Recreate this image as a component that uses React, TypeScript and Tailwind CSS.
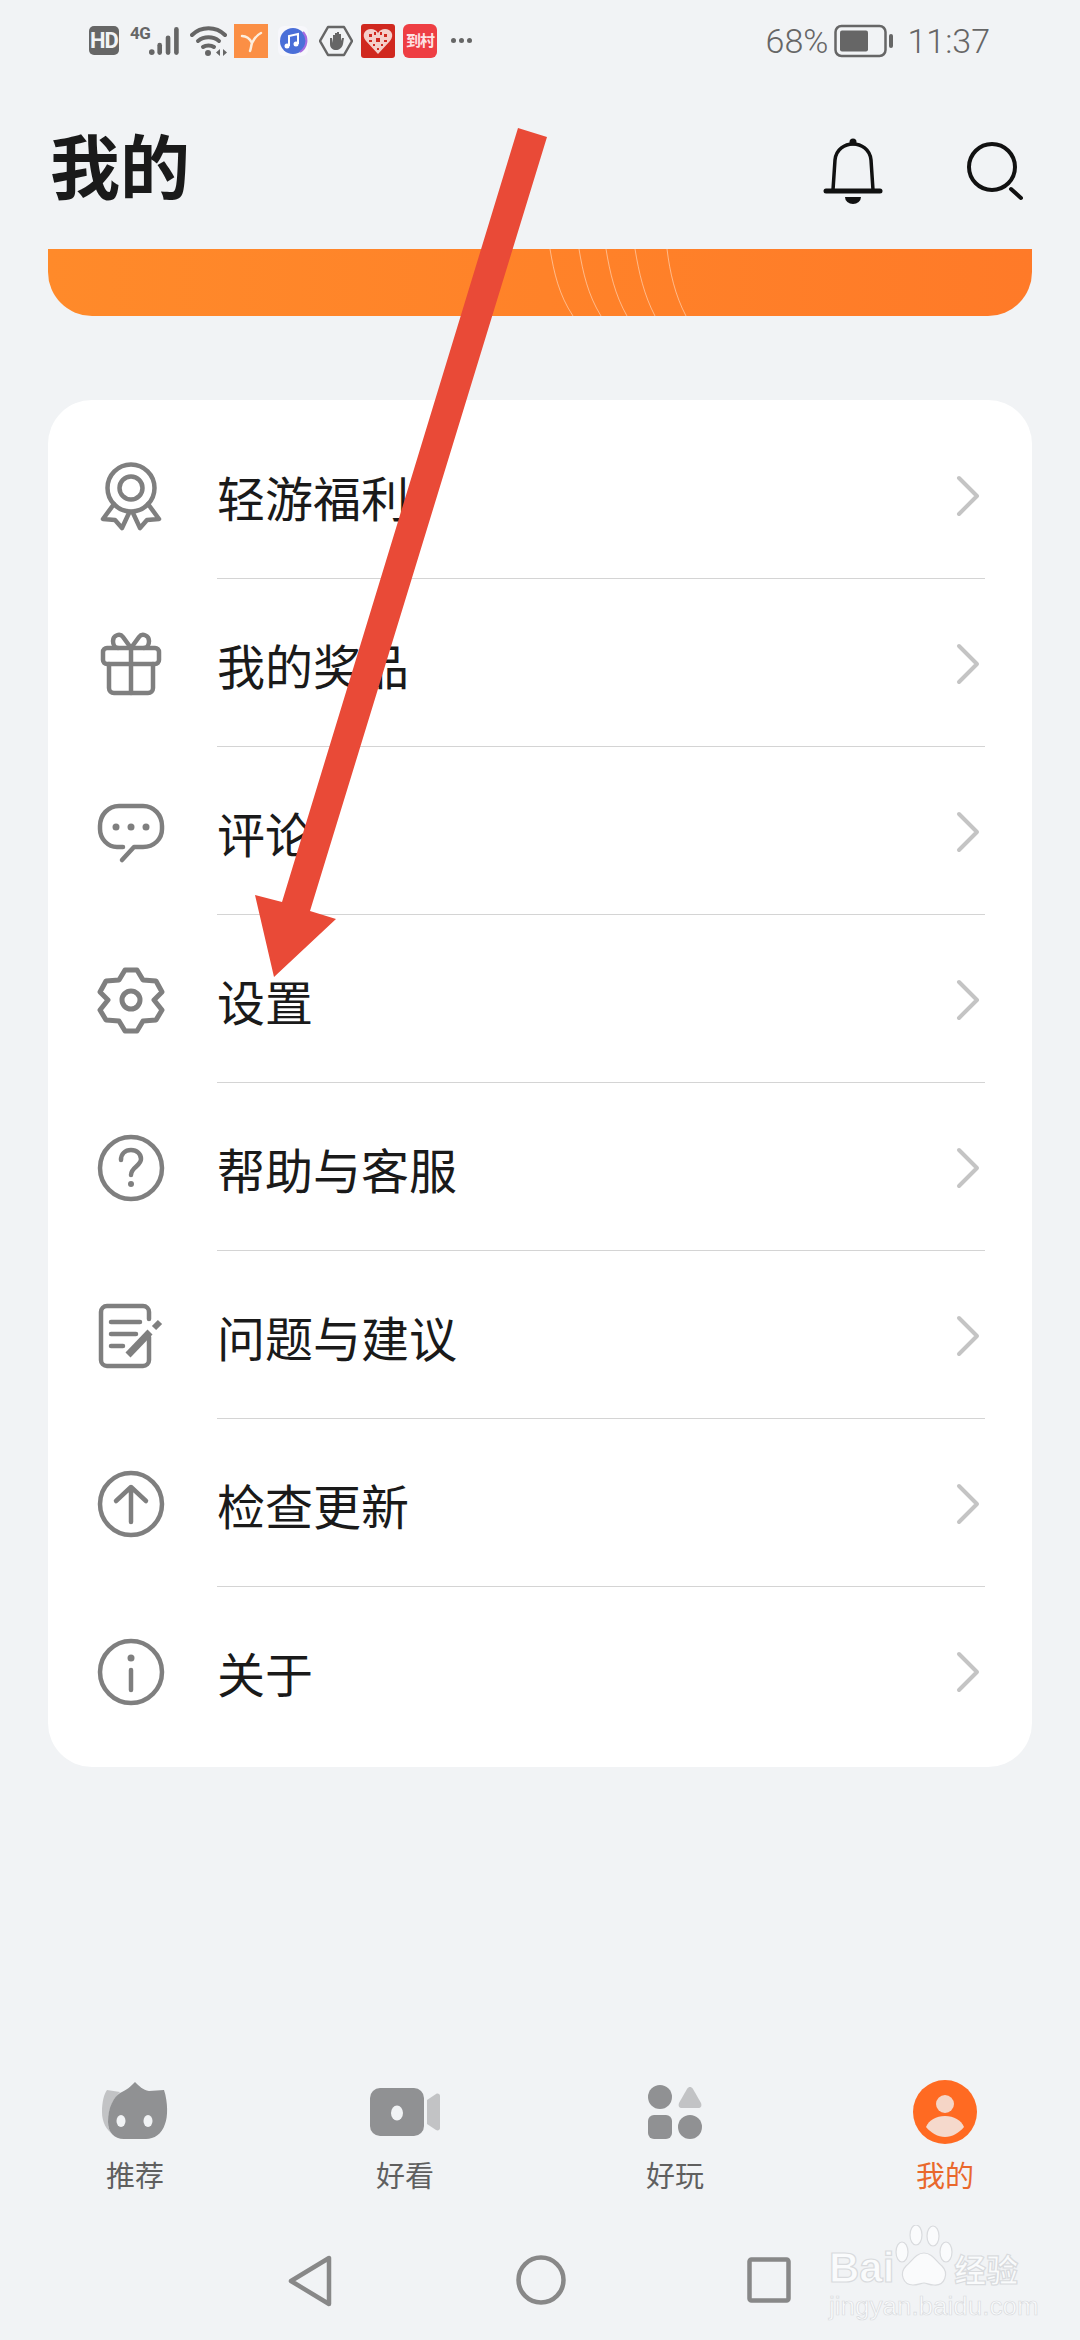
const rows = [
  { label: "轻游福利", icon: <AwardIcon /> },
  { label: "我的奖品", icon: <GiftIcon /> },
  { label: "评论", icon: <CommentIcon /> },
  { label: "设置", icon: <GearIcon /> },
  { label: "帮助与客服", icon: <HelpIcon /> },
  { label: "问题与建议", icon: <EditIcon /> },
  { label: "检查更新", icon: <UpdateIcon /> },
  { label: "关于", icon: <InfoIcon /> },
];

function IconBox({ children }: { children: React.ReactNode }) {
  return (
    <svg
      width="66"
      height="66"
      viewBox="0 0 66 66"
      fill="none"
      stroke="#7f7f7f"
      strokeWidth="4.500"
      strokeLinecap="round"
      strokeLinejoin="round"
      className="shrink-0 overflow-visible"
    >
      {children}
    </svg>
  );
}

function AwardIcon() {
  return (
    <IconBox>
      <circle cx="33" cy="25" r="23.500" />
      <circle cx="33" cy="25" r="11.500" />
      <path d="M16 41 5 56l12 1 7 8 7-15" />
      <path d="M50 41l11 15-12 1-7 8-7-15" />
    </IconBox>
  );
}

function GiftIcon() {
  return (
    <IconBox>
      <rect x="5" y="17" width="56" height="16" rx="4" />
      <path d="M11 33v24a5 5 0 0 0 5 5h34a5 5 0 0 0 5-5V33" />
      <path d="M33 17v45" />
      <path d="M33 17 25 6c-3-4-10-2-10 4 0 4 2 7 5 7" />
      <path d="M33 17l8-11c3-4 10-2 10 4 0 4-2 7-5 7" />
    </IconBox>
  );
}

function CommentIcon() {
  return (
    <IconBox>
      <path d="M25 48h-6C10 48 2 40 2 30v-3C2 16 10 7 21 7h24c11 0 19 9 19 20v3c0 10-8 18-19 18H36l-12 13" />
      <circle cx="18" cy="28" r="3.500" fill="#7f7f7f" stroke="none" />
      <circle cx="33" cy="28" r="3.500" fill="#7f7f7f" stroke="none" />
      <circle cx="48" cy="28" r="3.500" fill="#7f7f7f" stroke="none" />
    </IconBox>
  );
}

function GearIcon() {
  return (
    <IconBox>
      <path d="M27 3h12l6 10 13 1 6 11-8 8 8 10-6 10-13 1-6 10H27l-6-10-13-1-6-10 8-10-8-8 6-11 13-1z" strokeWidth="5" />
      <circle cx="33" cy="33" r="9" strokeWidth="5" />
    </IconBox>
  );
}

function HelpIcon() {
  return (
    <IconBox>
      <circle cx="33" cy="33" r="31" />
      <path d="M23 25c0-6 4-10 10-10s10 4 10 9c0 7-10 8-10 16" />
      <circle cx="33" cy="49" r="3" fill="#7f7f7f" stroke="none" />
    </IconBox>
  );
}

function EditIcon() {
  return (
    <IconBox>
      <path d="M51 34v23a6 6 0 0 1-6 6H9a6 6 0 0 1-6-6V9a6 6 0 0 1 6-6h36a6 6 0 0 1 6 6v7" />
      <path d="M13 19h29M13 31h25M13 43h12" />
      <path d="M30 52 52 29" strokeWidth="7" strokeLinecap="butt" strokeLinejoin="miter" />
      <path d="M56 25l6-6" strokeWidth="6" strokeLinecap="butt" />
    </IconBox>
  );
}

function UpdateIcon() {
  return (
    <IconBox>
      <circle cx="33" cy="33" r="31" />
      <path d="M33 51V17M18 30l15-14 15 14" />
    </IconBox>
  );
}

function InfoIcon() {
  return (
    <IconBox>
      <circle cx="33" cy="33" r="31" />
      <circle cx="33" cy="19" r="3.500" fill="#7f7f7f" stroke="none" />
      <path d="M33 31v20" />
    </IconBox>
  );
}

function Chevron() {
  return (
    <svg width="24" height="42" viewBox="0 0 24 42" fill="none" stroke="#c4c4c4" strokeWidth="4" strokeLinecap="round" strokeLinejoin="round">
      <path d="M3 3l18 18L3 39" />
    </svg>
  );
}

function StatusBar() {
  return (
    <div className="flex h-[80px] shrink-0 items-center justify-between pl-[89px] pr-[90px] pt-[1px] text-[#666]">
      <div className="flex items-center">
        <div className="flex h-[29px] w-[30px] items-center justify-center rounded-[5px] bg-[#666] font-['Roboto',sans-serif] text-[22px] font-bold tracking-[-1px] text-[#f1f3f5]">
          HD
        </div>
        <div className="ml-[11px] flex h-[30px] w-[50px] items-start">
          <span className="font-['Roboto',sans-serif] text-[17px] font-bold leading-[14px] tracking-[-0.5px]">4G</span>
          <svg width="33" height="30" viewBox="0 0 33 30" fill="#666" className="ml-[-1px]">
            <circle cx="3" cy="27" r="3" />
            <rect x="9" y="17" width="5" height="13" rx="2.500" />
            <rect x="18" y="9" width="5" height="21" rx="2.500" />
            <rect x="27" y="0" width="5" height="30" rx="2.500" />
          </svg>
        </div>
        <svg width="38" height="30" viewBox="0 0 38 30" fill="none" stroke="#666" strokeWidth="4" strokeLinecap="round" className="ml-[10px]">
          <path d="M2 9c9-9 24-9 33 0" />
          <path d="M8 15c6-5 15-5 21 0" />
          <path d="M13 21c3-2 8-2 11 0" />
          <circle cx="18" cy="27" r="3" fill="#666" stroke="none" />
          <path d="M30 23v7l-4-3.500zM33 23v7l4-3.500z" fill="#666" stroke="none" />
        </svg>
        <svg width="34" height="34" viewBox="0 0 34 34" className="ml-[6px]">
          <rect width="34" height="34" fill="#fb8f45" />
          <path d="M8 12c5 0 8 3 10 7M27 9c-4 2-7 6-9 10-1 3-1 6-2 8" fill="none" stroke="#fdeedd" strokeWidth="2.500" strokeLinecap="round" />
        </svg>
        <svg width="30" height="30" viewBox="0 0 30 30" className="ml-[10px]">
          <rect width="30" height="30" rx="6" fill="#f7f7fb" />
          <circle cx="15" cy="15" r="13" fill="#4a6fd8" />
          <path d="M25 6a13 13 0 0 1-3 20" fill="none" stroke="#a56be0" strokeWidth="2" />
          <path d="M11 20V10l9-2v10" fill="none" stroke="#fff" strokeWidth="2" />
          <circle cx="9" cy="20" r="2.500" fill="#fff" />
          <circle cx="18" cy="18" r="2.500" fill="#fff" />
        </svg>
        <svg width="34" height="32" viewBox="0 0 34 32" className="ml-[11px]">
          <path d="M9 2h16l8 14-8 14H9L1 16z" fill="none" stroke="#666" strokeWidth="2.500" strokeLinejoin="round" />
          <path d="M11 13v6c0 4 3 6 6 6s6-2 7-6l1-6h-2l-1 3V9h-2v6V7h-2v8V8h-2v8-6h-2v8l-1-5z" fill="#666" />
        </svg>
        <svg width="34" height="34" viewBox="0 0 34 34" className="ml-[8px]">
          <rect width="34" height="34" rx="3" fill="#d0281f" />
          <path d="M17 30 5 17C0 11 4 5 10 5c3 0 5 1 7 4 2-3 4-4 7-4 6 0 10 6 5 12z" fill="#f4cfca" />
          <path d="M8 10h3v3H8zM13 8h2v3h-2zM19 8h2v3h-2zM23 10h3v3h-3zM15 14h4v4h-4zM8 16h3v2H8zM23 16h3v2h-3zM12 20h2v2h-2zM20 20h2v2h-2zM16 24h2v2h-2z" fill="#d0281f" />
        </svg>
        <div className="ml-[8px] flex h-[34px] w-[34px] items-center justify-center rounded-[6px] bg-[#ee3e43] font-['Noto_Sans_CJK_SC',sans-serif] text-[15px] font-bold tracking-[-1px] text-[#fde3e3]">
          到村
        </div>
        <div className="ml-[14px] flex gap-[3px]">
          <span className="size-[5px] rounded-full bg-[#666]" />
          <span className="size-[5px] rounded-full bg-[#666]" />
          <span className="size-[5px] rounded-full bg-[#666]" />
        </div>
      </div>
      <div className="flex items-center font-['Roboto',sans-serif] text-[34px] font-light leading-none">
        <span>68%</span>
        <svg width="60" height="34" viewBox="0 0 60 34" className="ml-[6px]">
          <rect x="1.500" y="2" width="50" height="30" rx="6" fill="none" stroke="#666" strokeWidth="2.500" />
          <rect x="6" y="6.500" width="28" height="21" rx="2" fill="#666" />
          <rect x="55" y="10" width="4" height="14" rx="2" fill="#666" />
        </svg>
        <span className="ml-[13px]">11:37</span>
      </div>
    </div>
  );
}

function Header() {
  return (
    <div className="flex h-[169px] shrink-0 items-start justify-between pl-[50px] pr-[57px] pt-[44px]">
      <h1 className="font-['Noto_Sans_CJK_SC',sans-serif] text-[70px] font-bold leading-[80px] text-[#1a1a1a]">我的</h1>
      <div className="flex items-start pt-[14px]">
        <svg width="60" height="66" viewBox="0 0 60 66" fill="none" stroke="#111" strokeWidth="3.500" strokeLinecap="round">
          <path d="M10 52l2-30C13 11 22 6 30 6s17 5 18 16l2 30" />
          <path d="M3 53h54" strokeWidth="5" />
          <circle cx="30" cy="4" r="3.500" fill="#111" stroke="none" />
          <path d="M22 59h16a8 7 0 0 1-16 0z" fill="#111" stroke="none" />
        </svg>
        <svg width="56" height="60" viewBox="0 0 56 60" fill="none" stroke="#111" strokeWidth="4" strokeLinecap="round" className="ml-[84px] mt-[3px]">
          <circle cx="25" cy="26" r="23" />
          <path d="M44 48l10 9" />
        </svg>
      </div>
    </div>
  );
}

function Banner() {
  return (
    <div className="relative mx-[48px] h-[67px] shrink-0 overflow-hidden rounded-b-[44px] bg-gradient-to-r from-[#ff8a2a] to-[#ff7a28]">
      <svg width="984" height="67" viewBox="0 0 984 67" fill="none" stroke="#ffffff" strokeOpacity="0.45" strokeWidth="1" className="absolute left-0 top-0">
        <path d="M502 0c4 24 9 46 23 67" />
        <path d="M531 0c4 24 9 46 22 67" />
        <path d="M558 0c4 24 9 46 21 67" />
        <path d="M587 0c4 24 9 46 20 67" />
        <path d="M619 0c3 24 8 46 19 67" />
      </svg>
    </div>
  );
}

function SettingsCard() {
  return (
    <div className="mx-[48px] mt-[84px] shrink-0 rounded-[44px] bg-white pb-[12px] pt-[11px]">
      {rows.map((row, i) => (
        <div key={row.label} className="flex h-[168px] items-center pl-[50px]">
          <div className="pt-[1px]">{row.icon}</div>
          <div className={`ml-[53px] mr-[47px] flex h-full flex-1 items-center justify-between pr-[5px] pt-[2px] ${i < rows.length - 1 ? "border-b-[1.5px] border-[#d4d4d4]" : ""}`}>
            <span className="font-['Noto_Sans_CJK_SC',sans-serif] text-[48px] leading-none text-[#1a1a1a]">{row.label}</span>
            <Chevron />
          </div>
        </div>
      ))}
    </div>
  );
}

function TabBar() {
  return (
    <div className="mt-auto grid h-[150px] shrink-0 grid-cols-4 font-['Noto_Sans_CJK_SC',sans-serif] text-[29px] leading-none text-[#5f5f5f]">
      <div className="flex flex-col items-center">
        <svg width="66" height="64" viewBox="0 0 66 64" className="mt-[2px]">
          <path d="M5 8l13 2C10 18 6 30 6 40c0 6 2 10 6 13C4 48 0 40 0 30 0 20 2 12 5 8z" fill="#c2c3c5" />
          <path d="M6 40c0-15 6-25 12-29 7-3 11-7 15-11 4 4 8 8 14 9l15-1c4 12 4 27 1 34-3 10-11 15-19 15H22C12 57 6 50 6 40z" fill="#909193" />
          <ellipse cx="19" cy="39" rx="4.500" ry="6" fill="#f1f3f5" />
          <ellipse cx="46" cy="39" rx="4.500" ry="6" fill="#f1f3f5" />
        </svg>
        <span className="mt-[14px]">推荐</span>
      </div>
      <div className="flex flex-col items-center">
        <svg width="70" height="64" viewBox="0 0 70 64" className="mt-[2px]">
          <rect x="0" y="6" width="54" height="48" rx="10" fill="#909193" />
          <ellipse cx="27" cy="31" rx="6" ry="7.500" fill="#f1f3f5" />
          <path d="M57 18l9-6c2-1 4 0 4 2v32c0 2-2 3-4 2l-9-6z" fill="#c2c3c5" />
        </svg>
        <span className="mt-[14px]">好看</span>
      </div>
      <div className="flex flex-col items-center">
        <svg width="54" height="64" viewBox="0 0 54 64" className="mt-[3px]">
          <circle cx="12" cy="14" r="12" fill="#909193" />
          <path d="M42 4c1 0 2 .500 3 2l8 14c1 3 0 5-3 5H34c-3 0-4-2-3-5l8-14c1-1.500 2-2 3-2z" fill="#c2c3c5" />
          <rect x="0" y="32" width="24" height="24" rx="6" fill="#909193" />
          <circle cx="42" cy="44" r="12" fill="#909193" />
        </svg>
        <span className="mt-[13px]">好玩</span>
      </div>
      <div className="flex flex-col items-center text-[#e9682c]">
        <svg width="64" height="64" viewBox="0 0 64 64">
          <circle cx="32" cy="32" r="32" fill="#ff6a22" />
          <circle cx="32" cy="24" r="9" fill="#f5d5c6" />
          <path d="M13 47c3-7 10-11 19-11s16 4 19 11c-5 6-12 10-19 10s-14-4-19-10z" fill="#f5d9cc" />
        </svg>
        <span className="mt-[16px]">我的</span>
      </div>
    </div>
  );
}

function NavBar() {
  return (
    <div className="relative flex h-[110px] shrink-0 items-start gap-[184px] pl-[288px] pt-[25px]">
      <svg width="44" height="52" viewBox="0 0 44 52" fill="none" stroke="#888" strokeWidth="4.500" strokeLinejoin="round">
        <path d="M41 3v46L3 26z" />
      </svg>
      <svg width="50" height="50" viewBox="0 0 50 50" fill="none" stroke="#888" strokeWidth="4.500">
        <circle cx="25" cy="25" r="22.500" />
      </svg>
      <svg width="44" height="46" viewBox="0 0 44 46" fill="none" stroke="#888" strokeWidth="4.500" strokeLinejoin="round" className="ml-[-3px] mt-[2px]">
        <rect x="2.500" y="2.500" width="39" height="41" rx="2" />
      </svg>
      {/* baidu watermark */}
      <div className="absolute left-[829px] top-[-5px] w-[195px] text-[#fafbfc]">
        <div className="flex h-[62px] items-end [-webkit-text-stroke:1.2px_#d9dbde]">
          <span className="font-['Liberation_Sans',sans-serif] text-[42px] font-bold leading-[38px]">Bai</span>
          <svg width="60" height="62" viewBox="0 0 60 62" className="shrink-0" fill="#fafbfc" stroke="#d9dbde" strokeWidth="1.200">
            <ellipse cx="8" cy="27" rx="6" ry="10" />
            <ellipse cx="22" cy="10" rx="6" ry="10" />
            <ellipse cx="39" cy="11" rx="6" ry="10" />
            <ellipse cx="52" cy="27" rx="6" ry="10" />
            <path d="M30 28c8 0 12 8 18 13 7 7 3 20-8 19-5 0-7-2-10-2s-6 2-11 2c-10 0-14-12-7-19 6-5 10-13 18-13z" />
          </svg>
          <span className="font-['Noto_Sans_CJK_SC',sans-serif] text-[32px] font-bold leading-[38px]">经验</span>
        </div>
        <div className="mt-[6px] font-['Liberation_Sans',sans-serif] text-[26px] leading-[26px] [-webkit-text-stroke:0.7px_#d9dbde]">jingyan.baidu.com</div>
      </div>
    </div>
  );
}

export default function App() {
  return (
    <div className="relative flex h-[2340px] w-[1080px] flex-col overflow-hidden bg-[#f1f3f5]">
      <StatusBar />
      <Header />
      <Banner />
      <SettingsCard />
      <TabBar />
      <NavBar />
      {/* red annotation arrow drawn over the screenshot */}
      <svg width="1080" height="2340" viewBox="0 0 1080 2340" className="pointer-events-none absolute left-0 top-0">
        <polygon points="518,128 547,137 310,911 336,919 274,977 255,895 282,902" fill="#e94a37" />
      </svg>
    </div>
  );
}
